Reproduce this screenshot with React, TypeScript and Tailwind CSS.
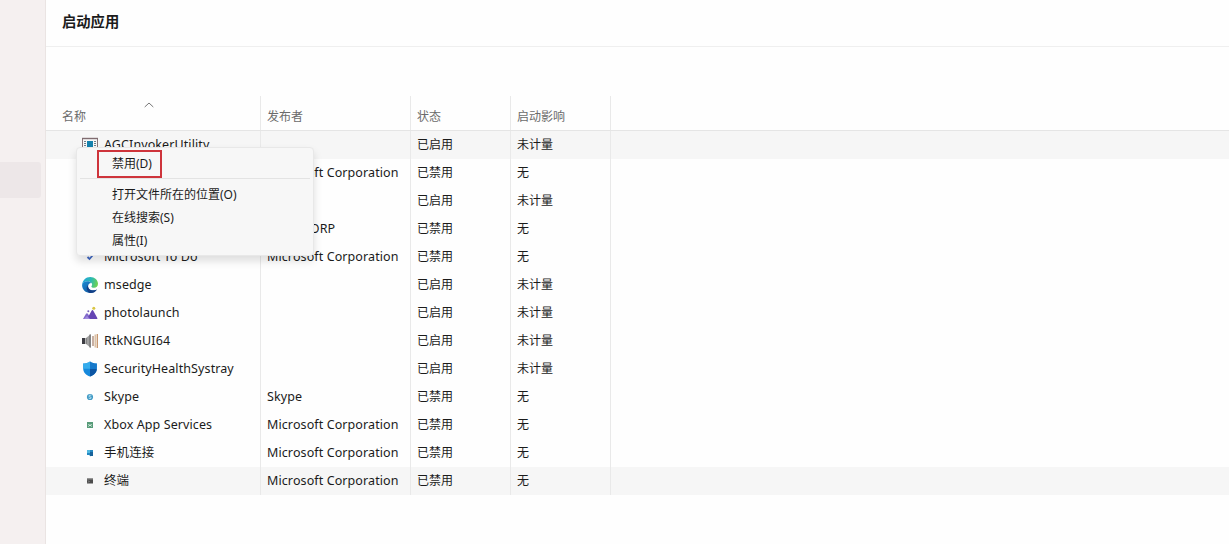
import type { ReactNode } from 'react';

type IconName = 'window' | 'edge' | 'photo' | 'speaker' | 'shield' | 'skype' | 'xbox' | 'phone' | 'terminal' | 'todo';

interface StartupApp {
  name: string;
  publisher?: string;
  enabled?: boolean;
  icon?: IconName;
  shaded?: boolean;
}

const apps: StartupApp[] = [
  { name: 'AGCInvokerUtility', enabled: true, icon: 'window', shaded: true },
  { name: '', publisher: 'Microsoft Corporation' },
  { name: '', enabled: true },
  { name: '', publisher: 'TENC CORP' },
  { name: 'Microsoft To Do', publisher: 'Microsoft Corporation', icon: 'todo' },
  { name: 'msedge', enabled: true, icon: 'edge' },
  { name: 'photolaunch', enabled: true, icon: 'photo' },
  { name: 'RtkNGUI64', enabled: true, icon: 'speaker' },
  { name: 'SecurityHealthSystray', enabled: true, icon: 'shield' },
  { name: 'Skype', publisher: 'Skype', icon: 'skype' },
  { name: 'Xbox App Services', publisher: 'Microsoft Corporation', icon: 'xbox' },
  { name: '手机连接', publisher: 'Microsoft Corporation', icon: 'phone' },
  { name: '终端', publisher: 'Microsoft Corporation', icon: 'terminal', shaded: true },
];

const drawings: Record<IconName, ReactNode> = {
  window: (
    <>
      <path d="M0.5 1.5h15v13H.5z" fill="#f7f7f7" stroke="#8a7478" />
      <path d="M0 1.5h16" stroke="#806c70" strokeWidth="1.4" />
      <path d="M5 4h6v6H5z" fill="#1581ad" />
      <path d="M2 4.5h2M2 6.5h2M2 8.5h2M12 4.5h2M12 6.5h2M12 8.5h2" stroke="#6f7d88" />
    </>
  ),
  todo: <path d="M5.5 8l2 2 3-3.5" fill="none" stroke="#3f68c4" strokeWidth="1.8" />,
  edge: (
    <>
      <defs>
        <linearGradient id="edgeTop" x1="0" x2="1" y1=".3" y2=".5">
          <stop stopColor="#23a5dc" />
          <stop offset=".55" stopColor="#2cb9b0" />
          <stop offset="1" stopColor="#70d34f" />
        </linearGradient>
        <linearGradient id="edgeLow" x1="0" x2="1" y1="0" y2="1">
          <stop stopColor="#1b8bd4" />
          <stop offset="1" stopColor="#104c93" />
        </linearGradient>
      </defs>
      <path d="M.1 7.8C.4 3.4 3.8 0 8.2 0 12.8 0 16 3.3 16 6.7c0 2.4-1.7 4-3.8 4-1.8 0-2.8-.7-2.8-1.3 0-.5.7-.7.7-1.8C10.100 5.800 8 4.300 5.600 4.300 2.700 4.300.7 5.900.1 7.800z" fill="url(#edgeTop)" />
      <path d="M.1 7.800C.7 5.600 2.500 4.300 5.400 4.300c1.500 0 3 .6 3.900 1.600C7.300 6.100 6 7.600 6 9.200c0 2.300 2.200 4.100 4.900 4.100 1.600 0 2.900-.4 4-.9C13.500 14.700 11 16 8 16 3.500 16-.2 12.300.1 7.800z" fill="url(#edgeLow)" />
      <path d="M6.200 8c-.8 3.100 1.600 5.400 4.700 5.400 1.600 0 2.900-.4 4-1-1.500 2.500-4.200 3.700-7 3.600C5 14.900 3.300 10.800 6.200 8z" fill="#123f86" />
    </>
  ),
  photo: (
    <>
      <path d="M1 14l3-5.200c.5-.8 1.400-.8 1.900 0L9 14z" fill="#8068ca" />
      <path d="M5 14l4.600-8.300c.4-.8 1.300-.8 1.700 0l4 7.200c.3.600 0 1.100-.6 1.100z" fill="#6545b4" />
      <path d="M2 14l3-3 3 3z" fill="#a18bdf" />
      <circle cx="11.800" cy="3.300" r="1.500" fill="#d9c543" />
      <circle cx="6.300" cy="6.200" r="1" fill="#7761bd" />
    </>
  ),
  speaker: (
    <>
      <path d="M0 5h3v6H0z" fill="#3c3c42" />
      <path d="M4 5l5-4v14l-5-4z" fill="#a1a1a1" />
      <path d="M4 5v6" stroke="#666" />
      <path d="M8 1.500v13" stroke="#666" />
      <path d="M11 3v10" stroke="#a98672" strokeWidth="1.300" />
      <path d="M13.200 1.500v13" stroke="#d3b391" strokeWidth="1.200" />
      <path d="M15.300 1v14" stroke="#c39268" strokeWidth="1.300" />
    </>
  ),
  shield: (
    <>
      <path d="M8 .5c2 1.500 4.200 2 6.800 2v5c0 4-2.900 6.800-6.800 8C4.100 14.300 1.200 11.500 1.200 7.500v-5C3.800 2.500 6 2 8 .5z" fill="#1689dc" />
      <path d="M8 .5v7.300H1.200V2.500C3.800 2.500 6 2 8 .5z" fill="#35acec" />
      <path d="M8 7.800h6.800c0 3.900-2.900 6.500-6.800 7.700z" fill="#0c55a3" />
      <path d="M8 .5c2 1.500 4.200 2 6.800 2v5.300H8z" fill="#1779ca" />
    </>
  ),
  skype: (
    <>
      <circle cx="8" cy="8" r="3.100" fill="#409ac5" />
      <path d="M9.300 6.600c-1-.7-2.600-.3-2.400.6.200.9 2.300.6 2.300 1.600 0 .8-1.600 1-2.500.3" fill="none" stroke="#d8f1fa" strokeWidth=".8" />
    </>
  ),
  xbox: (
    <>
      <path d="M5 5h6v6H5z" fill="#579b78" />
      <path d="M6.300 7l1.700 2 1.700-2M6.300 9.700l1.700-2 1.700 2" fill="none" stroke="#e0f1e7" strokeWidth=".8" />
    </>
  ),
  phone: (
    <>
      <path d="M5 5h6v5H9v1.500L7 10H5z" fill="#2387c1" />
      <path d="M8 7h3v4H8z" fill="#17629a" />
      <path d="M5 5h3v3H5z" fill="#50b7df" />
    </>
  ),
  terminal: (
    <>
      <path d="M5 5.500h6v5H5z" fill="#4c4c4c" />
      <path d="M5 6h6" stroke="#898989" />
      <path d="M6 7.500l1 1-1 1" fill="none" stroke="#bdbdbd" strokeWidth=".7" />
    </>
  ),
};

function AppIcon({ name }: { name: IconName }) {
  return (
    <svg viewBox="0 0 16 16" className="h-4 w-4 shrink-0">
      {drawings[name]}
    </svg>
  );
}

function Row({ app }: { app: StartupApp }) {
  return (
    <div className={`flex h-7 ${app.shaded ? 'bg-[#f6f6f6]' : ''}`}>
      <div className="flex w-[215px] items-center gap-[6px] border-r border-[#e9e9e9] pl-[36px]">
        {app.icon && <AppIcon name={app.icon} />}
        <span className="text-[12.500px] tracking-[0.100px]">{app.name}</span>
      </div>
      <div className="flex w-[150px] items-center border-r border-[#e9e9e9] pl-[6px] text-[12.500px] tracking-[0.100px]">
        {app.publisher}
      </div>
      <div className="flex w-[100px] items-center border-r border-[#e9e9e9] pl-[6px]">{app.enabled ? '已启用' : '已禁用'}</div>
      <div className="flex w-[100px] items-center border-r border-[#e9e9e9] pl-[6px]">{app.enabled ? '未计量' : '无'}</div>
    </div>
  );
}

function ContextMenu() {
  return (
    <div className="absolute left-[76px] top-[147px] h-[109px] w-[238px] rounded-[4px] border border-[#e8e8e8] bg-[#f7f7f7] text-[12px] shadow-[0_5px_9px_rgba(0,0,0,0.13)]">
      <div className="ml-[20px] mt-[2px] flex h-[28px] w-[65px] items-center border-2 border-[#ce343b] pl-[13px]">禁用(D)</div>
      <div className="mx-[3px] mb-[4px] border-t border-[#e3e3e3]" />
      {['打开文件所在的位置(O)', '在线搜索(S)', '属性(I)'].map((label) => (
        <div key={label} className="flex h-[23px] items-center pl-[35px]">
          {label}
        </div>
      ))}
    </div>
  );
}

export default function App() {
  return (
    <div className="relative flex h-[544px] w-[1229px] overflow-hidden bg-[#fefefe] font-['Noto_Sans','Noto_Sans_CJK_SC',sans-serif] text-[12px] leading-[18px] whitespace-nowrap text-[#1b1b1b]">
      <aside className="w-[46px] shrink-0 border-r border-[#eae4e3] bg-[#f5f0f0] pt-[162px]">
        <div className="h-[36px] w-[41px] rounded-r-[3px] bg-[#ede7e8]" />
      </aside>
      <main className="flex min-w-0 flex-1 flex-col">
        <header className="flex h-[47px] shrink-0 items-center border-b border-[#efefef] pb-[2px] pl-[16px]">
          <h1 className="text-[14.300px] font-semibold">启动应用</h1>
        </header>
        <div className="mt-[49px] flex h-[35px] shrink-0 border-b border-[#e5e5e5] text-[#6b6b6b]">
          <div className="flex w-[215px] flex-col border-r border-[#e9e9e9] pl-[16px]">
            <svg viewBox="0 0 10 6" className="mt-[6px] ml-[82px] h-[6px] w-[10px] shrink-0">
              <path d="M.7 5L5 1l4.300 4" fill="none" stroke="#777" />
            </svg>
            <span>名称</span>
          </div>
          <div className="w-[150px] border-r border-[#e9e9e9] pt-[12px] pl-[6px]">发布者</div>
          <div className="w-[100px] border-r border-[#e9e9e9] pt-[12px] pl-[6px]">状态</div>
          <div className="w-[100px] border-r border-[#e9e9e9] pt-[12px] pl-[6px]">启动影响</div>
        </div>
        <div>
          {apps.map((app, i) => (
            <Row key={i} app={app} />
          ))}
        </div>
      </main>
      <ContextMenu />
    </div>
  );
}
